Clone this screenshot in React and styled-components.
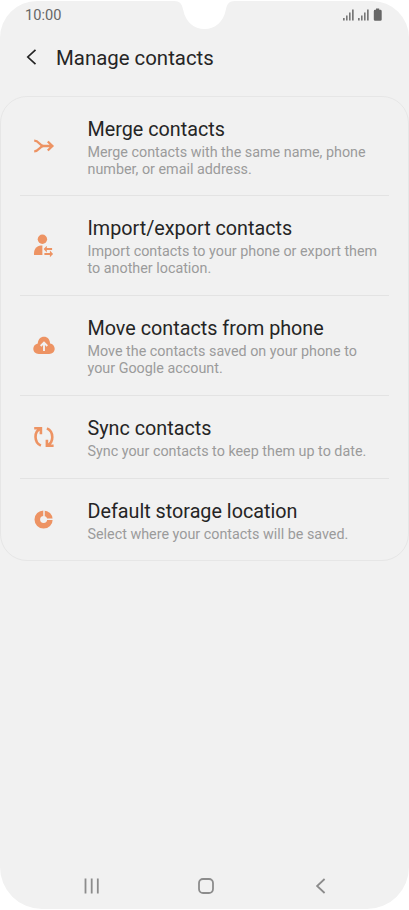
import React from "react";
import styled, { createGlobalStyle } from "styled-components";

const GlobalStyle = createGlobalStyle`
  * { box-sizing: border-box; }
  body { margin: 0; background: #fff; font-family: Roboto, "Liberation Sans", sans-serif; }
`;

const Screen = styled.main`
  position: relative;
  display: flex;
  flex-direction: column;
  width: 409px;
  height: 908px;
  margin-top: 1px;
  background: #f1f1f1;
  border-radius: 37px 37px 42px 42px;
  overflow: hidden;
`;

const Notch = styled.svg`
  position: absolute;
  top: -1px;
  left: 174px;
`;

const StatusBar = styled.div`
  display: flex;
  align-items: center;
  justify-content: space-between;
  height: 28px;
  padding: 0 26px 0 25px;
  font-size: 14.6px;
  color: #666;
`;

const Header = styled.header`
  display: flex;
  align-items: center;
  height: 57px;
  padding-left: 24px;
  gap: 16px;
`;

const HeaderTitle = styled.h1`
  margin: 0;
  font-size: 20.4px;
  line-height: 28px;
  font-weight: 400;
  color: #252525;
`;

const Card = styled.section`
  margin-top: 10px;
  height: 465px;
  padding: 0 19px;
  border: 1px solid #e6e6e6;
  border-radius: 27px;
`;

const Row = styled.div`
  display: flex;
  align-items: center;
  height: ${(p) => p.$height}px;
  border-bottom: ${(p) => (p.$last ? "none" : "1px solid #e3e3e3")};
`;

const IconCell = styled.div`
  display: flex;
  width: 67.5px;
  flex: none;
  padding-left: 11.5px;
`;

const Copy = styled.div`
  padding-top: ${(p) => (p.$single ? 4 : 3)}px;
  white-space: nowrap;
`;

const Title = styled.h2`
  margin: 0;
  font-size: 19.75px;
  line-height: 25px;
  font-weight: 400;
  color: #252525;
`;

const Description = styled.p`
  margin: 3.2px 0 0;
  font-size: 14.34px;
  line-height: 16.7px;
  color: #9b9b9b;
`;

const NavBar = styled.nav`
  display: flex;
  align-items: center;
  justify-content: space-between;
  height: 46px;
  margin-top: auto;
  padding: 0 78px 0 82px;
`;

const orange = "#ed9363";

const MergeIcon = () => (
  <svg width="24" height="24" viewBox="0 0 24 24" fill="none" stroke={orange} strokeWidth="2.3">
    <path d="M2.2 6.7C7.2 6.7 7.5 12 11.5 12H20.5M2.2 17.3C7.2 17.3 7.5 12 11.5 12M15.8 7.5L20.4 12L15.8 16.5" />
  </svg>
);

const TransferIcon = () => (
  <svg width="24" height="24" viewBox="0 0 24 24" fill={orange}>
    <circle cx="10.4" cy="5.2" r="4.7" />
    <path d="M10.4 11.5V21H2V19.3C2 15.2 4.8 11.5 8.9 11.5Z" />
    <path d="M11.6 15.1L14.8 11.8V14.1H20.1V16.1H14.8V18.4Z" />
    <path d="M21.1 19.9L17.9 16.6V18.9H12.4V20.9H17.9V23.2Z" />
  </svg>
);

const CloudIcon = () => (
  <svg width="24" height="24" viewBox="0 0 24 24">
    <path fill={orange} d="M6.8 21C3.6 21 1.3 18.7 1.3 15.8C1.3 13 3.2 10.9 5.8 10.4C6.1 6.5 8.5 3.8 12 3.8C15.4 3.8 17.9 6.5 18.1 10.4C20.8 10.7 22.7 13 22.7 15.8C22.7 18.7 20.4 21 17.2 21Z" />
    <path fill="none" stroke="#f1f1f1" strokeWidth="1.9" d="M12 17.9V10.5M8.7 13L12 9.7L15.3 13" />
  </svg>
);

const SyncIcon = () => (
  <svg width="24" height="24" viewBox="0 0 24 24" fill="none" stroke={orange} strokeWidth="2.6">
    <path d="M2.2 3.2H8.9V9.3M8.5 3.8C1.8 6.5 1.8 17.5 8.9 20.6" />
    <path d="M21.6 20.8H14.9V14.7M15.3 20.2C22 17.5 22 6.5 14.9 3.4" />
  </svg>
);

const StorageIcon = () => (
  <svg width="24" height="24" viewBox="0 0 24 24">
    <circle cx="11.6" cy="11.5" r="6.3" fill="none" stroke={orange} strokeWidth="5.6" />
    <path stroke="#f1f1f1" strokeWidth="1.5" d="M12 1.5V8.5M14.6 11.3H22" />
  </svg>
);

const StatusIcons = () => (
  <svg width="40" height="14" viewBox="0 0 40 14" fill="#777">
    <path d="M0 10H1.7V12.5H0ZM3 7.5H4.6V12.5H3ZM6 4.5H7.6V12.5H6ZM9 1.5H10.7V12.5H9Z" />
    <path d="M15 10H16.7V12.5H15ZM18 7.5H19.6V12.5H18ZM21 4.5H22.6V12.5H21ZM24 1.5H25.7V12.5H24Z" />
    <path fill="#666" d="M33 .5H36.2V1.8H37.3Q38.7 1.8 38.7 3.2V11.4Q38.7 12.8 37.3 12.8H32.2Q30.8 12.8 30.8 11.4V3.2Q30.8 1.8 32.2 1.8H33Z" />
  </svg>
);

const rows = [
  { title: "Merge contacts", lines: ["Merge contacts with the same name, phone", "number, or email address."], height: 99, Icon: MergeIcon },
  { title: "Import/export contacts", lines: ["Import contacts to your phone or export them", "to another location."], height: 100, Icon: TransferIcon },
  { title: "Move contacts from phone", lines: ["Move the contacts saved on your phone to", "your Google account."], height: 99.5, Icon: CloudIcon },
  { title: "Sync contacts", lines: ["Sync your contacts to keep them up to date."], height: 83, Icon: SyncIcon },
  { title: "Default storage location", lines: ["Select where your contacts will be saved."], height: 82, Icon: StorageIcon },
];

export default function App() {
  return (
    <>
      <GlobalStyle />
      <Screen>
        <Notch width="61" height="30" viewBox="0 0 61 30" fill="#fff">
          <path d="M0 0H61V1C55 1 53 4 51.8 10C49.5 22 41 29 30.5 29C20 29 11.5 22 9.2 10C8 4 6 1 0 1Z" />
        </Notch>
        <StatusBar>
          <span>10:00</span>
          <StatusIcons />
        </StatusBar>
        <Header>
          <svg width="16" height="20" viewBox="0 0 16 20" fill="none" stroke="#252525" strokeWidth="1.7">
            <path d="M11.5 1.8L3.8 9L11.5 16.2" />
          </svg>
          <HeaderTitle>Manage contacts</HeaderTitle>
        </Header>
        <Card>
          {rows.map(({ title, lines, height, Icon }, index) => (
            <Row key={title} $height={height} $last={index === rows.length - 1}>
              <IconCell><Icon /></IconCell>
              <Copy $single={lines.length === 1}>
                <Title>{title}</Title>
                <Description>
                  {lines.map((line, i) => (
                    <React.Fragment key={line}>{i > 0 && <br />}{line}</React.Fragment>
                  ))}
                </Description>
              </Copy>
            </Row>
          ))}
        </Card>
        <NavBar>
          <svg width="20" height="20" viewBox="0 0 20 20" stroke="#8c8c8c" strokeWidth="1.8">
            <path d="M3.5 2.5V17.5M9.7 2.5V17.5M15.8 2.5V17.5" />
          </svg>
          <svg width="20" height="20" viewBox="0 0 20 20" fill="none" stroke="#8c8c8c" strokeWidth="1.8">
            <rect x="2" y="3" width="14" height="14" rx="4" />
          </svg>
          <svg width="20" height="20" viewBox="0 0 20 20" fill="none" stroke="#8c8c8c" strokeWidth="1.8">
            <path d="M13.6 3L6.1 10L13.6 17" />
          </svg>
        </NavBar>
      </Screen>
    </>
  );
}
